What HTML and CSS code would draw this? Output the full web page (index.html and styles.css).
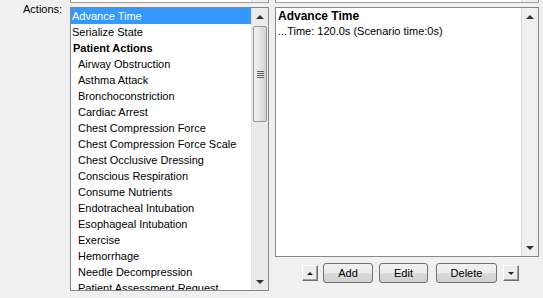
FILE: index.html
```html
<!DOCTYPE html>
<html lang="en">
<head>
    <meta charset="UTF-8">
    <title>Actions</title>
    <link rel="stylesheet" href="styles.css">
</head>
<body>
    <div class="top-strip">
        <div class="strip-box left"><div class="strip-sb"></div></div>
        <div class="strip-box right"><div class="strip-sb"></div></div>
    </div>
    <div class="row">
        <div class="label">Actions:</div>
        <div class="listbox">
            <div class="items">
                <div class="item selected">Advance Time</div>
                <div class="item">Serialize State</div>
                <div class="item category">Patient Actions</div>
                <div class="item sub">Airway Obstruction</div>
                <div class="item sub">Asthma Attack</div>
                <div class="item sub">Bronchoconstriction</div>
                <div class="item sub">Cardiac Arrest</div>
                <div class="item sub">Chest Compression Force</div>
                <div class="item sub">Chest Compression Force Scale</div>
                <div class="item sub">Chest Occlusive Dressing</div>
                <div class="item sub">Conscious Respiration</div>
                <div class="item sub">Consume Nutrients</div>
                <div class="item sub">Endotracheal Intubation</div>
                <div class="item sub">Esophageal Intubation</div>
                <div class="item sub">Exercise</div>
                <div class="item sub">Hemorrhage</div>
                <div class="item sub">Needle Decompression</div>
                <div class="item sub">Patient Assessment Request</div>
            </div>
            <div class="vscroll">
                <div class="sb-arrow"><span class="tri up"></span></div>
                <div class="sb-track">
                    <div class="sb-thumb"><span class="grip"></span></div>
                </div>
                <div class="sb-arrow"><span class="tri down"></span></div>
            </div>
        </div>
        <div class="right-col">
            <div class="detail">
                <div class="detail-text">
                    <div class="detail-title">Advance Time</div>
                    <div>...Time: 120.0s (Scenario time:0s)</div>
                </div>
                <div class="vscroll plain">
                    <div class="sb-arrow"><span class="tri up"></span></div>
                    <div class="sb-track"></div>
                    <div class="sb-arrow"><span class="tri down"></span></div>
                </div>
            </div>
            <div class="buttons">
                <button class="small-btn"><span class="tri up"></span></button>
                <button class="btn add">Add</button>
                <button class="btn edit">Edit</button>
                <button class="btn delete">Delete</button>
                <button class="small-btn last"><span class="tri down"></span></button>
            </div>
        </div>
    </div>
</body>
</html>
```

FILE: styles.css
```css
body {
    margin: 0;
    background-color: #f0f0f0;
    font-family: "Liberation Sans", Arial, sans-serif;
    font-size: 11px;
    color: #000;
}
.top-strip {
    display: flex;
    height: 3px;
    margin-bottom: 4px;
}
.strip-box {
    display: flex;
    justify-content: flex-end;
    box-sizing: border-box;
    height: 3px;
    border: 1px solid #a0a0a0;
    border-top: none;
    background: #fff;
}
.strip-box.left {
    margin-left: 70px;
    width: 199px;
}
.strip-box.right {
    margin-left: 6px;
    width: 264px;
}
.strip-sb {
    width: 16px;
    border-left: 1px solid #d6d6d6;
    background: #f0f0f0;
}
.row {
    display: flex;
    align-items: flex-start;
}
.label {
    width: 70px;
    box-sizing: border-box;
    margin-top: -4px;
    padding-left: 23px;
}
.listbox {
    display: flex;
    width: 199px;
    height: 284px;
    box-sizing: border-box;
    border: 1px solid #828790;
    background: #fff;
    overflow: hidden;
}
.items {
    flex: 1;
    overflow: hidden;
}
.item {
    height: 16px;
    line-height: 16px;
    padding-left: 1px;
    white-space: nowrap;
}
.item.selected {
    background: #3399ff;
    color: #fff;
}
.item.category {
    font-weight: bold;
    padding-left: 2px;
}
.item.sub {
    padding-left: 7px;
}
.vscroll {
    display: flex;
    flex-direction: column;
    width: 16px;
    flex: none;
    background: #eaeaea;
    border-left: 1px solid #e3e3e3;
}
.vscroll.plain {
    border-left: 1px solid #d9d9d9;
    background: #f0f0f0;
}
.sb-arrow {
    height: 17px;
    display: flex;
    align-items: center;
    justify-content: center;
    flex: none;
}
.sb-track {
    flex: 1;
    padding-top: 1px;
}
.sb-thumb {
    margin: 0 1px;
    height: 96px;
    box-sizing: border-box;
    border: 1px solid #979797;
    border-radius: 2px;
    background: linear-gradient(to right, #f2f2f2, #e4e4e4 50%, #d2d2d2);
    display: flex;
    align-items: center;
    justify-content: center;
}
.grip {
    width: 7px;
    height: 7px;
    background: repeating-linear-gradient(to bottom, #5f5f5f 0, #5f5f5f 1px, transparent 1px, transparent 2px);
}
.tri {
    width: 0;
    height: 0;
    border-left: 4px solid transparent;
    border-right: 4px solid transparent;
}
.tri.up {
    border-bottom: 4px solid #333;
}
.tri.down {
    border-top: 4px solid #333;
}
.right-col {
    margin-left: 6px;
    width: 264px;
}
.detail {
    display: flex;
    height: 250px;
    box-sizing: border-box;
    border: 1px solid #828790;
    background: #fff;
}
.detail-text {
    flex: 1;
    padding: 1px 0 0 2px;
    line-height: 15px;
    white-space: nowrap;
}
.detail-title {
    font-weight: bold;
    font-size: 12px;
}
.buttons {
    display: flex;
    align-items: center;
    margin-top: 6px;
    padding-left: 27px;
}
.btn {
    height: 20px;
    box-sizing: border-box;
    border: 1px solid #707070;
    border-radius: 3px;
    background: linear-gradient(to bottom, #f2f2f2 0, #ebebeb 50%, #dddddd 51%, #cfcfcf 100%);
    font-family: "Liberation Sans", Arial, sans-serif;
    font-size: 11px;
    color: #000;
    padding: 0;
}
.btn.add {
    width: 50px;
    margin-left: 5px;
}
.btn.edit {
    width: 49px;
    margin-left: 6px;
}
.btn.delete {
    width: 61px;
    margin-left: 8px;
}
.small-btn {
    width: 16px;
    height: 16px;
    box-sizing: border-box;
    padding: 0;
    display: flex;
    align-items: center;
    justify-content: center;
    background: #ececec;
    border: 1px solid;
    border-color: #fff #6e6e6e #6e6e6e #fff;
    box-shadow: inset -1px -1px 0 #a0a0a0;
}
.small-btn.last {
    margin-left: 6px;
}
.small-btn .tri {
    border-left-width: 3px;
    border-right-width: 3px;
}
.small-btn .tri.up {
    border-bottom: 3px solid #222;
}
.small-btn .tri.down {
    border-top: 3px solid #222;
}
```
